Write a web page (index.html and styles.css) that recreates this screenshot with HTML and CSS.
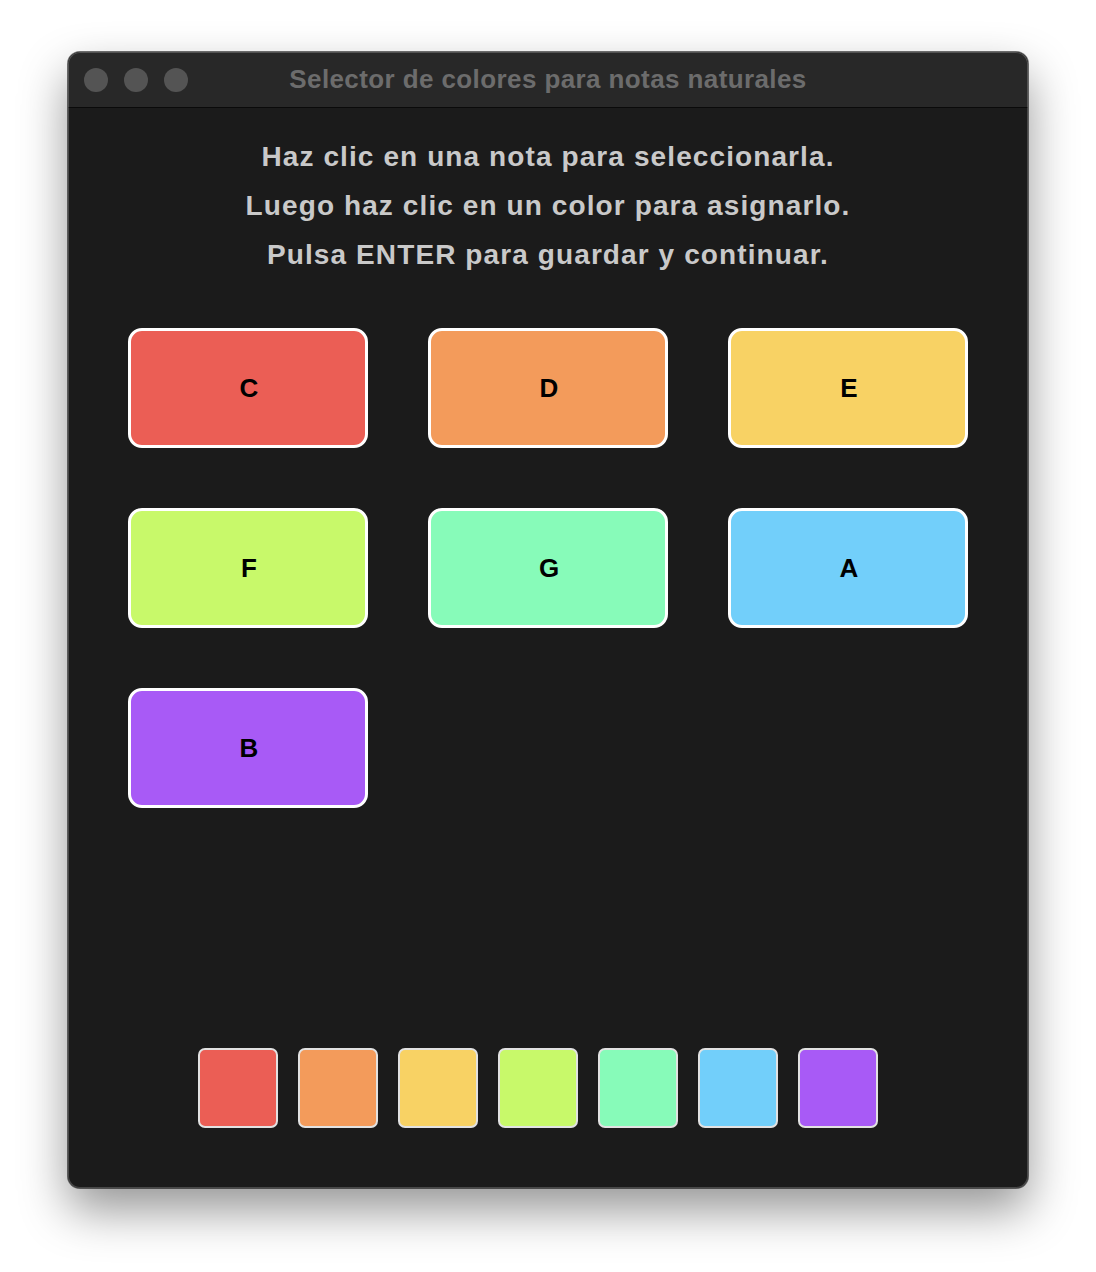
FILE: index.html
```html
<!DOCTYPE html>
<html lang="es">
<head>
<meta charset="utf-8">
<title>Selector de colores para notas naturales</title>
<link rel="stylesheet" href="styles.css">
</head>
<body>
<div class="window">
  <div class="titlebar">
    <div class="lights">
      <span class="light"></span><span class="light"></span><span class="light"></span>
    </div>
    <div class="title">Selector de colores para notas naturales</div>
  </div>
  <div class="content">
    <div class="instructions">
      <p class="line">Haz clic en una nota para seleccionarla.</p>
      <p class="line">Luego haz clic en un color para asignarlo.</p>
      <p class="line">Pulsa ENTER para guardar y continuar.</p>
    </div>
    <div class="notes">
      <div class="note c-red">C</div>
      <div class="note c-orange">D</div>
      <div class="note c-yellow">E</div>
      <div class="note c-lime">F</div>
      <div class="note c-mint">G</div>
      <div class="note c-sky">A</div>
      <div class="note c-purple">B</div>
    </div>
    <div class="palette">
      <div class="swatch c-red"></div>
      <div class="swatch c-orange"></div>
      <div class="swatch c-yellow"></div>
      <div class="swatch c-lime"></div>
      <div class="swatch c-mint"></div>
      <div class="swatch c-sky"></div>
      <div class="swatch c-purple"></div>
    </div>
  </div>
</div>
</body>
</html>
```
FILE: styles.css
```css
* { box-sizing: border-box; }
html, body { margin: 0; padding: 0; background: #ffffff; }
body {
  padding: 52px 68px 0 68px;
  width: 1096px;
  height: 1272px;
  overflow: hidden;
  font-family: "Liberation Sans", Arial, sans-serif;
}
.window {
  position: relative;
  width: 960px;
  height: 1136px;
  border-radius: 12px;
  background: #1b1b1b;
  overflow: hidden;
  box-shadow: 0 22px 48px rgba(0,0,0,0.42), 0 0 0 1px rgba(0,0,0,0.55);
}
.window::after {
  content: "";
  position: absolute;
  inset: 0;
  border-radius: 12px;
  box-shadow: inset 0 0 0 1px rgba(255,255,255,0.2);
  pointer-events: none;
}
.titlebar {
  position: relative;
  height: 56px;
  background: #282828;
  border-bottom: 1px solid #0a0a0a;
  display: flex;
  align-items: center;
  justify-content: center;
}
.lights {
  position: absolute;
  left: 16px;
  top: 16px;
  display: flex;
  gap: 16px;
}
.light {
  width: 24px;
  height: 24px;
  border-radius: 50%;
  background: #545454;
}
.title {
  font-weight: bold;
  font-size: 26px;
  color: #6c6c6c;
  letter-spacing: 0.4px;
}
.content {
  height: 1080px;
  display: flex;
  flex-direction: column;
}
.instructions {
  padding-top: 24px;
  display: flex;
  flex-direction: column;
  align-items: center;
}
.line {
  margin: 0;
  height: 49px;
  line-height: 49px;
  font-size: 28px;
  font-weight: bold;
  color: #c9c9c9;
  letter-spacing: 1.1px;
}
.notes {
  margin-top: 49px;
  padding: 0 60px;
  display: grid;
  grid-template-columns: repeat(3, 240px);
  grid-auto-rows: 120px;
  column-gap: 60px;
  row-gap: 60px;
}
.note {
  border: 3px solid #ffffff;
  border-radius: 14px;
  display: flex;
  align-items: center;
  justify-content: center;
  font-size: 26px;
  font-weight: bold;
  color: #000000;
  padding-left: 2px;
}
.palette {
  margin-top: 240px;
  padding-left: 130px;
  display: flex;
  gap: 20px;
}
.swatch {
  width: 80px;
  height: 80px;
  border: 2px solid #e2e2e2;
  border-radius: 7px;
}
.c-red { background: #eb5e55; }
.c-orange { background: #f39b5b; }
.c-yellow { background: #f8d264; }
.c-lime { background: #c8f96a; }
.c-mint { background: #87fbb9; }
.c-sky { background: #72cffa; }
.c-purple { background: #a85af6; }
```
